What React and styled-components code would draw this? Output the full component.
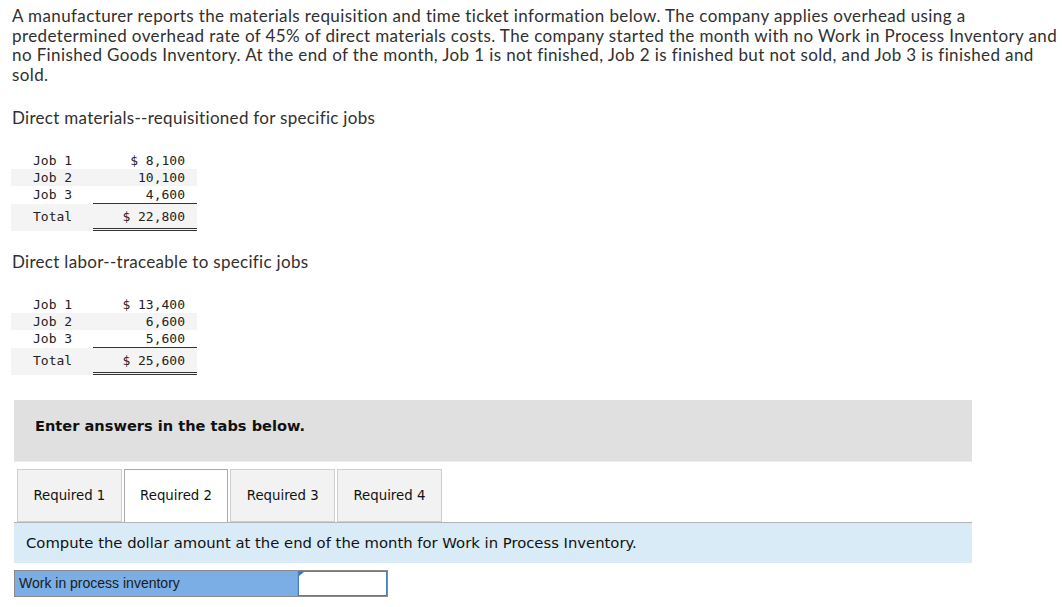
import React from 'react';
import styled, { createGlobalStyle } from 'styled-components';

const GlobalStyle = createGlobalStyle`
  body {
    margin: 0;
    background: #fff;
  }
`;

const materials = [
  { job: 'Job 1', amount: '$ 8,100' },
  { job: 'Job 2', amount: '10,100' },
  { job: 'Job 3', amount: '4,600' },
];
const labor = [
  { job: 'Job 1', amount: '$ 13,400' },
  { job: 'Job 2', amount: '6,600' },
  { job: 'Job 3', amount: '5,600' },
];

const tabs = ['Required 1', 'Required 2', 'Required 3', 'Required 4'];

const CostTable = ({ rows, total }) => (
  <Table>
    {rows.map((r, i) => (
      <Row key={r.job} $shade={i % 2 === 1}>
        <Label>{r.job}</Label>
        <Amount $rule={i === rows.length - 1 ? 'single' : null}>{r.amount}</Amount>
      </Row>
    ))}
    <Row $shade $total>
      <Label>Total</Label>
      <Amount $rule="double">{total}</Amount>
    </Row>
  </Table>
);

const App = () => {
  return (
    <Page>
      <GlobalStyle />
      <Intro>
        A manufacturer reports the materials requisition and time ticket information below. The company applies overhead using a<br />
        predetermined overhead rate of 45% of direct materials costs. The company started the month with no Work in Process Inventory and<br />
        no Finished Goods Inventory. At the end of the month, Job 1 is not finished, Job 2 is finished but not sold, and Job 3 is finished and<br />
        sold.
      </Intro>

      <Heading>Direct materials--requisitioned for specific jobs</Heading>
      <CostTable rows={materials} total="$ 22,800" />

      <Heading $tight>Direct labor--traceable to specific jobs</Heading>
      <CostTable rows={labor} total="$ 25,600" />

      <AnswerBox>
        <Banner>Enter answers in the tabs below.</Banner>
        <TabBar>
          {tabs.map((t, i) => (
            <Tab key={t} $active={i === 1}>{t}</Tab>
          ))}
        </TabBar>
        <Prompt>Compute the dollar amount at the end of the month for Work in Process Inventory.</Prompt>
        <InputRow>
          <InputLabel>Work in process inventory</InputLabel>
          <InputCell>
            <input type="text" aria-label="Work in process inventory" />
          </InputCell>
        </InputRow>
      </AnswerBox>
    </Page>
  );
};

const Page = styled.div`
  width: 1062px;
  padding: 6px 0 0 12px;
  box-sizing: border-box;
  color: #303030;
`;

const Intro = styled.p`
  margin: 0 0 24px;
  font-family: Lato, 'Noto Sans', sans-serif;
  font-size: 17px;
  letter-spacing: 0.39px;
  line-height: 19.6px;
  white-space: nowrap;
`;

const Heading = styled.p`
  margin: ${(p) => (p.$tight ? '21px' : '0')} 0 24px;
  font-family: Lato, 'Noto Sans', sans-serif;
  font-size: 17px;
  letter-spacing: 0.3px;
  line-height: 19.6px;
`;

const Table = styled.div`
  display: flex;
  flex-direction: column;
  width: 186px;
  margin-left: -1px;
  font-family: 'DejaVu Sans Mono', 'Liberation Mono', monospace;
  font-size: 13px;
  color: #222;
`;

const Row = styled.div`
  display: flex;
  align-items: stretch;
  background: ${(p) => (p.$shade ? '#f4f4f4' : 'transparent')};
  line-height: ${(p) => (p.$total ? '22px' : '17px')};
  padding-top: ${(p) => (p.$total ? '2px' : '0')};
`;

const Label = styled.div`
  width: 82px;
  padding-left: 22px;
  box-sizing: border-box;
`;

const Amount = styled.div`
  width: 104px;
  padding-right: 12px;
  box-sizing: border-box;
  text-align: right;
  border-bottom: ${(p) =>
    p.$rule === 'double' ? '3px double #333' : p.$rule === 'single' ? '1px solid #333' : 'none'};
`;

const AnswerBox = styled.div`
  margin: 25px 0 0 2px;
  width: 958px;
`;

const Banner = styled.div`
  height: 62px;
  box-sizing: border-box;
  padding: 17px 0 0 21px;
  line-height: 18px;
  background: #e0e0e0;
  border-bottom: 1px solid #ececec;
  font-family: 'DejaVu Sans', Verdana, sans-serif;
  font-size: 14.6px;
  font-weight: bold;
  color: #111;
`;

const TabBar = styled.div`
  display: flex;
  gap: 2px;
  margin-top: 7px;
  padding-left: 3px;
`;

const Tab = styled.div`
  width: 104.7px;
  height: 53px;
  box-sizing: border-box;
  display: flex;
  align-items: center;
  justify-content: center;
  background: ${(p) => (p.$active ? '#fff' : '#f2f2f2')};
  border: 1px solid ${(p) => (p.$active ? '#aaa' : '#cfcfcf')};
  border-bottom: ${(p) => (p.$active ? 'none' : '1px solid #cfcfcf')};
  font-family: 'DejaVu Sans', Verdana, sans-serif;
  font-size: 13.3px;
  color: #111;
`;

const Prompt = styled.div`
  height: 41px;
  box-sizing: border-box;
  display: flex;
  align-items: center;
  padding-left: 12px;
  background: #daebf8;
  border-top: 1px solid #b4b4b4;
  font-family: 'DejaVu Sans', Verdana, sans-serif;
  font-size: 14.8px;
  color: #111;
`;

const InputRow = styled.div`
  display: flex;
  margin-top: 7px;
  height: 27px;
`;

const InputLabel = styled.div`
  width: 284px;
  box-sizing: border-box;
  display: flex;
  align-items: center;
  padding-left: 4px;
  background: #7aaee4;
  border: 1px solid #8a8a8a;
  border-right: 1px solid #9a9a9a;
  font-family: 'Liberation Sans', Arial, sans-serif;
  font-size: 14px;
  color: #1a1a1a;
`;

const InputCell = styled.div`
  position: relative;
  width: 90px;
  box-sizing: border-box;
  border: 1px solid #8a8a8a;
  border-left: none;

  input {
    width: 100%;
    height: 100%;
    box-sizing: border-box;
    margin: 0;
    border: 1px solid #4a7fc0;
    outline: none;
    background: #fff;
  }

  &::before {
    content: '';
    position: absolute;
    top: 1px;
    left: 1px;
    border-top: 4px solid #3b78c2;
    border-right: 5px solid transparent;
    border-bottom: 4px solid transparent;
    border-left: 0;
    z-index: 1;
  }
`;

export default App;
